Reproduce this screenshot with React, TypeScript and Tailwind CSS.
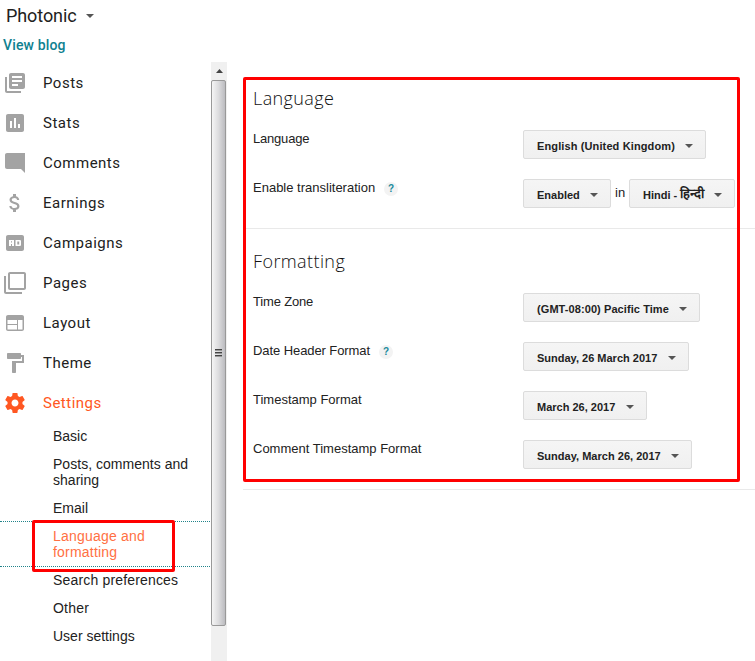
import React from "react";

const menu = [
  { label: "Posts", d: "M4 6H2v14c0 1.1.9 2 2 2h14v-2H4V6zm16-4H8c-1.1 0-2 .9-2 2v12c0 1.1.9 2 2 2h12c1.1 0 2-.9 2-2V4c0-1.1-.9-2-2-2zm-1 9H9V9h10v2zm-4 4H9v-2h6v2zm4-8H9V5h10v2z" },
  { label: "Stats", d: "M19 3H5c-1.1 0-2 .9-2 2v14c0 1.1.9 2 2 2h14c1.1 0 2-.9 2-2V5c0-1.1-.9-2-2-2zM9 17H7v-7h2v7zm4 0h-2V7h2v10zm4 0h-2v-4h2v4z" },
  { label: "Comments", d: "M22 2H4c-1.1 0-2 .9-2 2v12c0 1.1.9 2 2 2h14l4 4V2z" },
  { label: "Earnings", d: "M11.8 10.9c-2.27-.59-3-1.2-3-2.15 0-1.09 1.01-1.85 2.7-1.85 1.78 0 2.44.85 2.5 2.1h2.21c-.07-1.72-1.12-3.3-3.21-3.81V3h-3v2.16c-1.94.42-3.5 1.68-3.5 3.61 0 2.31 1.91 3.46 4.7 4.13 2.5.6 3 1.48 3 2.41 0 .69-.49 1.79-2.7 1.79-2.06 0-2.87-.92-2.98-2.1h-2.2c.12 2.19 1.76 3.42 3.68 3.83V21h3v-2.15c1.95-.37 3.5-1.5 3.5-3.55 0-2.84-2.43-3.81-4.7-4.4z" },
  { label: "Campaigns", d: "M5 4h14c1.1 0 2 .9 2 2v12c0 1.1-.9 2-2 2H5c-1.1 0-2-.9-2-2V6c0-1.1.9-2 2-2zM6 9v6h2v-2h1v2h2V9H6zm2 1.300h1v1.200H8v-1.200zM12.500 9v6h4.700l.8-.8V9.800l-.8-.8H12.500zm1.800 1.500h1.900v3h-1.900v-3z" },
  { label: "Pages", d: "M3 5H1v16c0 1.1.9 2 2 2h16v-2H3V5zm18-4H7c-1.100 0-2 .9-2 2v14c0 1.100.9 2 2 2h14c1.100 0 2-.9 2-2V3c0-1.100-.9-2-2-2zm0 16H7V3h14v14z" },
  { label: "Layout", d: "M5 4h14c1.100 0 2 .9 2 2v12c0 1.100-.9 2-2 2H5c-1.100 0-2-.9-2-2V6c0-1.100.9-2 2-2zM4.500 9v4h9.500V9H4.500zm0 5v4.500h9.500V14H4.500zM15 9v9.500h4.500V9H15z" },
  { label: "Theme", d: "M18 4V3c0-.55-.45-1-1-1H5c-.55 0-1 .45-1 1v4c0 .55.45 1 1 1h12c.55 0 1-.45 1-1V6h1v4H9v11c0 .55.45 1 1 1h2c.55 0 1-.45 1-1v-9h8V4h-3z" },
  { label: "Settings", active: true, d: "M19.430 12.980c.04-.32.07-.64.07-.98s-.03-.66-.07-.98l2.110-1.650c.19-.15.24-.42.12-.64l-2-3.460c-.12-.22-.39-.3-.61-.22l-2.490 1c-.52-.4-1.080-.73-1.690-.98l-.38-2.650C14.460 2.180 14.250 2 14 2h-4c-.25 0-.46.18-.49.42l-.38 2.650c-.61.25-1.170.59-1.690.98l-2.490-1c-.23-.09-.49 0-.61.22l-2 3.460c-.13.22-.07.49.12.64l2.110 1.650c-.04.32-.07.65-.07.98s.03.66.07.98l-2.110 1.650c-.19.15-.24.42-.12.64l2 3.460c.12.22.39.3.61.22l2.490-1c.52.4 1.080.73 1.690.98l.38 2.650c.03.24.24.42.49.42h4c.25 0 .46-.18.49-.42l.38-2.650c.61-.25 1.170-.59 1.690-.98l2.490 1c.23.09.49 0 .61-.22l2-3.460c.12-.22.07-.49-.12-.64l-2.110-1.650zM12 15.500c-1.930 0-3.500-1.570-3.500-3.500s1.570-3.500 3.500-3.500 3.500 1.570 3.500 3.500-1.570 3.500-3.500 3.500z" },
];

function Caret() {
  return (
    <svg className="h-1 w-2 shrink-0" viewBox="0 0 8 4" fill="#555">
      <path d="M0 0h8L4 4z" />
    </svg>
  );
}

function Select({ children, className }: { children: React.ReactNode; className: string }) {
  return (
    <button
      className={`flex h-[29px] items-center justify-between whitespace-nowrap rounded-xs border border-[#dcdcdc] bg-linear-to-b from-[#f5f5f5] to-[#f0f0f0] pl-[13px] pr-3 pt-[3px] text-[11px] font-bold text-[#222] ${className}`}
    >
      <span>{children}</span>
      <Caret />
    </button>
  );
}

function Row({ label, help, track = "", children }: { label: string; help?: boolean; track?: string; children: React.ReactNode }) {
  return (
    <div className="flex h-[49px] items-start">
      <div className="flex w-[270px] shrink-0 items-center text-[13px] leading-[18px] text-[#222]">
        <span className={`whitespace-nowrap ${track}`}>{label}</span>
        {help && (
          <span className="ml-[9px] mt-px flex size-[14px] items-center justify-center rounded-full bg-[#f3f3f3] text-[10px] font-bold text-[#1a8a9c]">?</span>
        )}
      </div>
      {children}
    </div>
  );
}

function Heading({ children }: { children: string }) {
  return <h2 className="h-[53px] pt-2 font-['Open_Sans'] text-[18px] font-light leading-[27px] tracking-[0.4px] text-[#111]">{children}</h2>;
}

function SubItem({ children, track = "" }: { children: React.ReactNode; track?: string }) {
  return <div className={`py-1.5 pl-[53px] ${track}`}>{children}</div>;
}

export default function App() {
  return (
    <div className="relative flex h-[661px] w-[755px] flex-col overflow-hidden bg-white font-['Liberation_Sans',Arial,sans-serif]">
      <header className="h-[62px] shrink-0 font-['Roboto',sans-serif]">
        <div className="flex h-8 items-center gap-[9px] pl-[6px] text-[18px] text-[#212121]">
          <span className="-mt-px tracking-[-0.08px]">Photonic</span>
          <Caret />
        </div>
        <a className="ml-[3px] block pt-1 text-[14px] font-medium leading-[18px] tracking-[0.14px] text-[#0f8190]">View blog</a>
      </header>
      <div className="flex min-h-0 flex-1">
        <nav className="w-[211px] shrink-0 overflow-hidden">
          <ul className="pt-px font-['Roboto',sans-serif] text-[15px]">
            {menu.map((m) => (
              <li key={m.label} className={`flex h-10 items-center gap-4 pl-[3px] ${m.active ? "text-[#ff5722]" : "text-[#212121]"}`}>
                <svg className={`size-6 ${m.active ? "fill-[#ff5722]" : "fill-[#a3a3a3]"}`} viewBox="0 0 24 24" fillRule="evenodd">
                  <path d={m.d} />
                </svg>
                <span className="tracking-[0.5px]">{m.label}</span>
              </li>
            ))}
          </ul>
          <div className="-mt-px text-[14px] leading-4 text-[#222]">
            <SubItem>Basic</SubItem>
            <SubItem track="tracking-[0.03px]">Posts, comments and<br />sharing</SubItem>
            <SubItem>Email</SubItem>
            <div className="-my-px w-[210px] border-y border-dotted border-[#21838a] text-[#ff7043]">
              <SubItem track="tracking-[0.2px]">Language and<br />formatting</SubItem>
            </div>
            <SubItem track="tracking-[0.17px]">Search preferences</SubItem>
            <SubItem track="tracking-[0.2px]">Other</SubItem>
            <SubItem>User settings</SubItem>
          </div>
        </nav>
        <div className="flex w-4 shrink-0 flex-col bg-[#f0f0f0]">
          <div className="flex h-[18px] items-center justify-center">
            <svg className="h-1 w-[7px]" viewBox="0 0 7 4" fill="#444"><path d="M3.500 0L7 4H0z" /></svg>
          </div>
          <div className="flex h-[546px] w-[15px] flex-col items-center justify-center gap-[2px] rounded-xs border border-[#999] bg-linear-to-r from-[#f5f5f5] via-[#dcdcde] to-[#bcbcc0] pb-0.5">
            <i className="h-px w-[7px] bg-[#444] shadow-[0_1px_0_#999]" />
            <i className="h-px w-[7px] bg-[#444] shadow-[0_1px_0_#999]" />
            <i className="h-px w-[7px] bg-[#444] shadow-[0_1px_0_#999]" />
          </div>
        </div>
        <main className="ml-4 flex-1 pt-[15px]">
          <section className="h-[152px] border-b border-[#e9e9e9] pl-[10px]">
            <Heading>Language</Heading>
            <Row label="Language" track="tracking-[-0.2px]">
              <Select className="w-[183px] tracking-[0.12px]">English (United Kingdom)</Select>
            </Row>
            <Row label="Enable transliteration" help>
              <Select className="w-[88px]">Enabled</Select>
              <span className="mx-1 mt-1 w-[10px] text-[13px] text-[#222]">in</span>
              <Select className="w-[106px]">Hindi - <span className="relative -top-px inline-block text-[13px] leading-[13px]">हिन्दी</span></Select>
            </Row>
          </section>
          <section className="h-[261px] border-b border-[#e9e9e9] pl-[10px] pt-[11px]">
            <Heading>Formatting</Heading>
            <Row label="Time Zone" track="tracking-[-0.17px]">
              <Select className="w-[177px] tracking-[0.08px]">(GMT-08:00) Pacific Time</Select>
            </Row>
            <Row label="Date Header Format" help track="tracking-[-0.08px]">
              <Select className="w-[166px]">Sunday, 26 March 2017</Select>
            </Row>
            <Row label="Timestamp Format">
              <Select className="w-[124px]">March 26, 2017</Select>
            </Row>
            <Row label="Comment Timestamp Format">
              <Select className="w-[169px] tracking-[0.02px]">Sunday, March 26, 2017</Select>
            </Row>
          </section>
        </main>
      </div>
      <div className="pointer-events-none absolute left-[243px] top-[77px] h-[405px] w-[497px] rounded-xs border-3 border-[#ff0000]" />
      <div className="pointer-events-none absolute left-[32px] top-[520px] h-[52px] w-[143px] rounded-xs border-3 border-[#ff0000]" />
    </div>
  );
}
